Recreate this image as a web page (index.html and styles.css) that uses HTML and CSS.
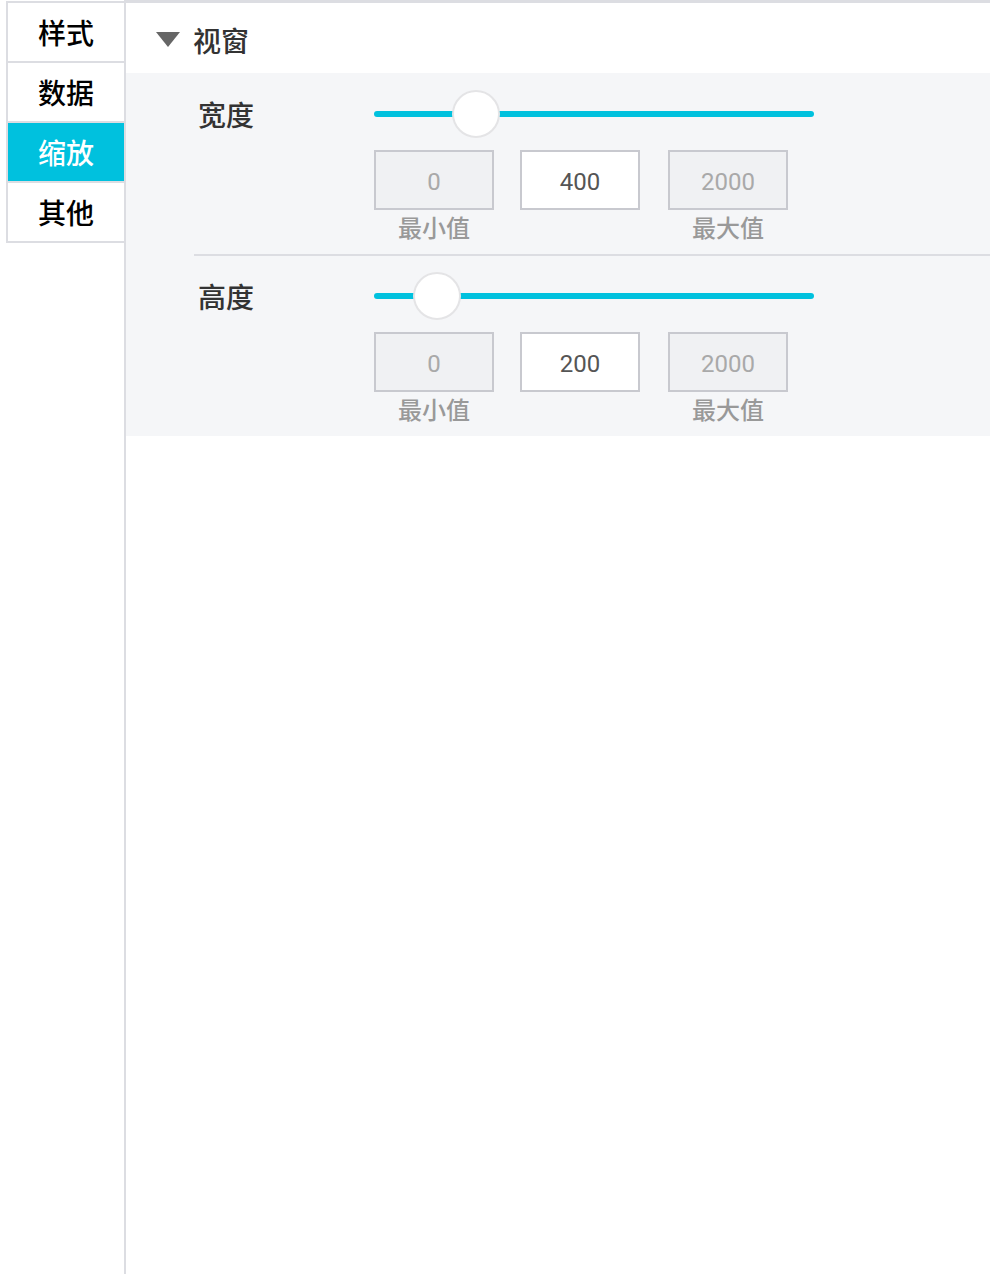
FILE: index.html
```html
<!DOCTYPE html>
<html lang="zh-CN">
<head>
<meta charset="utf-8">
<title>缩放</title>
<link rel="stylesheet" href="styles.css">
</head>
<body>
<div class="app">
  <nav class="tabs">
    <div class="tab">样式</div>
    <div class="tab">数据</div>
    <div class="tab active">缩放</div>
    <div class="tab">其他</div>
  </nav>
  <main class="panel">
    <div class="section-head">
      <span class="caret"></span>
      <span class="section-title">视窗</span>
    </div>
    <div class="section-body">
      <div class="row">
        <div class="slider-line">
          <div class="label">宽度</div>
          <div class="slider">
            <div class="track"></div>
            <div class="thumb" style="left: 78px"></div>
          </div>
        </div>
        <div class="inputs">
          <div class="field">
            <div class="box disabled">0</div>
            <div class="caption">最小值</div>
          </div>
          <div class="field">
            <div class="box">400</div>
          </div>
          <div class="field">
            <div class="box disabled">2000</div>
            <div class="caption">最大值</div>
          </div>
        </div>
      </div>
      <div class="row">
        <div class="slider-line">
          <div class="label">高度</div>
          <div class="slider">
            <div class="track"></div>
            <div class="thumb" style="left: 39px"></div>
          </div>
        </div>
        <div class="inputs">
          <div class="field">
            <div class="box disabled">0</div>
            <div class="caption">最小值</div>
          </div>
          <div class="field">
            <div class="box">200</div>
          </div>
          <div class="field">
            <div class="box disabled">2000</div>
            <div class="caption">最大值</div>
          </div>
        </div>
      </div>
    </div>
  </main>
</div>
</body>
</html>
```

FILE: styles.css
```css
* { box-sizing: border-box; }
html, body {
  margin: 0;
  padding: 0;
  background: #ffffff;
  font-family: "Noto Sans CJK SC", "Noto Sans", sans-serif;
}
.app {
  display: flex;
  align-items: flex-start;
  height: 1274px;
}
.tabs {
  width: 118px;
  margin-left: 6px;
  margin-top: 1px;
  border-left: 2px solid #dcdde2;
  border-top: 2px solid #dcdde2;
  display: flex;
  flex-direction: column;
}
.tab {
  height: 60px;
  border-bottom: 2px solid #dcdde2;
  display: flex;
  align-items: center;
  justify-content: center;
  font-size: 28px;
  font-weight: 500;
  color: #000000;
  line-height: 1;
}
.tab.active {
  background: #00c1de;
  color: #ffffff;
}
.panel {
  flex: 1;
  height: 1274px;
  border-left: 2px solid #dcdde2;
  border-top: 3px solid #dcdde2;
}
.section-head {
  height: 70px;
  display: flex;
  align-items: center;
  padding-left: 30px;
  padding-top: 3px;
  background: #ffffff;
}
.caret {
  width: 0;
  height: 0;
  border-left: 12px solid transparent;
  border-right: 12px solid transparent;
  border-top: 15px solid #666666;
  margin-right: 13px;
}
.section-title {
  font-size: 28px;
  font-weight: 500;
  color: #333333;
  line-height: 1;
}
.section-body {
  background: #f5f6f8;
  padding-left: 68px;
}
.row {
  padding-top: 17px;
  padding-bottom: 10px;
}
.row + .row {
  border-top: 2px solid #dcdde2;
  padding-top: 16px;
}
.slider-line {
  display: flex;
  align-items: center;
  height: 48px;
}
.label {
  width: 180px;
  padding-left: 4px;
  font-size: 28px;
  font-weight: 500;
  color: #333333;
  line-height: 1;
}
.slider {
  position: relative;
  width: 440px;
  height: 48px;
  display: flex;
  align-items: center;
}
.track {
  width: 100%;
  height: 6px;
  border-radius: 3px;
  background: #00c1de;
}
.thumb {
  position: absolute;
  top: 0;
  width: 48px;
  height: 48px;
  border-radius: 50%;
  background: #ffffff;
  border: 2px solid #e4e4e6;
}
.inputs {
  display: flex;
  gap: 26px;
  margin-left: 180px;
  margin-top: 12px;
}
.field {
  width: 120px;
  display: flex;
  flex-direction: column;
  align-items: center;
}
.field:last-child {
  margin-left: 2px;
}
.box {
  width: 120px;
  height: 60px;
  padding-top: 3px;
  border: 2px solid #c8c9cf;
  background: #ffffff;
  display: flex;
  align-items: center;
  justify-content: center;
  font-family: "Roboto", "Noto Sans", sans-serif;
  font-size: 24px;
  color: #555555;
}
.box.disabled {
  background: #f0f1f3;
  color: #a9a9a9;
}
.caption {
  height: 34px;
  line-height: 34px;
  font-size: 24px;
  font-weight: 500;
  color: #999999;
}
```
